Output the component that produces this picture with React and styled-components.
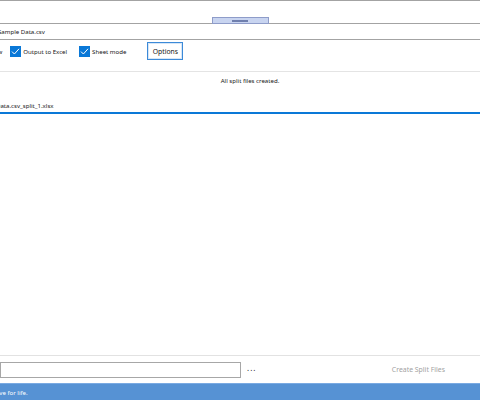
import React from "react";
import { styled, createGlobalStyle } from "styled-components";

const GlobalStyle = createGlobalStyle`
  html, body {
    margin: 0;
    padding: 0;
    background: #ffffff;
  }
  body {
    font-family: "Noto Sans", "DejaVu Sans", sans-serif;
    font-size: 6.1px;
    color: #161616;
  }
`;

const Window = styled.div`
  width: 480px;
  height: 400px;
  display: flex;
  flex-direction: column;
  overflow: hidden;
  background: #ffffff;
`;

const SplitterArea = styled.div`
  height: 22px;
  border-top: 1px solid #a3a3a3;
  display: flex;
  justify-content: center;
  align-items: flex-end;
`;

const SplitterHandle = styled.div`
  position: relative;
  z-index: 1;
  box-sizing: border-box;
  width: 57px;
  height: 7px;
  margin-bottom: -1px;
  border: 1px solid #8e9cc9;
  background: #c8d4f0;
  display: flex;
  justify-content: center;
  align-items: center;
`;

const HandleGrip = styled.div`
  width: 16px;
  height: 2px;
  background: #6f7fae;
`;

const FileRow = styled.div`
  height: 15px;
  border-top: 1px solid #a3a3a3;
  border-bottom: 1px solid #a3a3a3;
  display: flex;
  align-items: center;
`;

const Cropped = styled.span`
  margin-left: ${(p) => p.$shift}px;
  white-space: nowrap;
`;

const Toolbar = styled.div`
  box-sizing: border-box;
  height: 32px;
  padding-bottom: 9px;
  border-bottom: 1px solid #e4e4e4;
  display: flex;
  align-items: center;
`;

const CheckItem = styled.label`
  display: flex;
  align-items: center;
  gap: 2px;
  margin-left: ${(p) => p.$gap}px;
  white-space: nowrap;
`;

const Box = styled.span`
  width: 11px;
  height: 11px;
  background: #0a78d7;
  display: flex;
  align-items: center;
  justify-content: center;
`;

const OptionsButton = styled.button`
  box-sizing: border-box;
  width: 36px;
  height: 18px;
  margin-left: 21px;
  padding: 0;
  border: 1px solid #3c8ad8;
  outline: 1px solid #d6e6f7;
  outline-offset: -2px;
  background: #ffffff;
  font-family: inherit;
  font-size: 6.8px;
  color: #161616;
`;

const Content = styled.div`
  flex: 1;
  display: flex;
  flex-direction: column;
`;

const Message = styled.div`
  box-sizing: border-box;
  text-align: center;
  padding: 4px 0 0 20px;
  line-height: 10px;
  height: 27px;
`;

const ListItem = styled.div`
  height: 13px;
  border-bottom: 2px solid #0a78d7;
  display: flex;
  align-items: center;
`;

const BottomRow = styled.div`
  height: 27px;
  border-top: 1px solid #e2e2e2;
  display: flex;
  align-items: center;
`;

const PathInput = styled.input`
  box-sizing: border-box;
  width: 241px;
  height: 16px;
  margin: 1px 0 0 0;
  border: 1px solid #a7a7a7;
  background: #ffffff;
`;

const BrowseButton = styled.span`
  margin-left: 6px;
  font-size: 8px;
  letter-spacing: 1px;
  color: #222;
  line-height: 8px;
  padding-bottom: 3px;
`;

const CreateButton = styled.button`
  margin-left: auto;
  margin-right: 35px;
  border: none;
  background: transparent;
  font-family: inherit;
  font-size: 6.9px;
  color: #a2a2a2;
  padding: 0;
`;

const StatusBar = styled.div`
  height: 16px;
  border-top: 1px solid #7aaae2;
  background: #5692d4;
  color: #ffffff;
  display: flex;
  align-items: center;
`;

function Check() {
  return (
    <svg width="9" height="9" viewBox="0 0 9 9">
      <path d="M1 4.6 L3.4 7 L8 1.8" fill="none" stroke="#fff" strokeWidth="1" />
    </svg>
  );
}

export default function App() {
  return (
    <>
      <GlobalStyle />
      <Window>
        <SplitterArea>
          <SplitterHandle>
            <HandleGrip />
          </SplitterHandle>
        </SplitterArea>
        <FileRow>
          <Cropped $shift={-2}>Sample Data.csv</Cropped>
        </FileRow>
        <Toolbar>
          <Cropped $shift={-20}>Preview</Cropped>
          <CheckItem $gap={8}>
            <Box>
              <Check />
            </Box>
            Output to Excel
          </CheckItem>
          <CheckItem $gap={12}>
            <Box>
              <Check />
            </Box>
            Sheet mode
          </CheckItem>
          <OptionsButton>Options</OptionsButton>
        </Toolbar>
        <Content>
          <Message>All split files created.</Message>
          <ListItem>
            <Cropped $shift={-4}>Data.csv_split_1.xlsx</Cropped>
          </ListItem>
        </Content>
        <BottomRow>
          <PathInput />
          <BrowseButton>...</BrowseButton>
          <CreateButton>Create Split Files</CreateButton>
        </BottomRow>
        <StatusBar>
          <Cropped $shift={-55}>Have a nice day. Save for life.</Cropped>
        </StatusBar>
      </Window>
    </>
  );
}
